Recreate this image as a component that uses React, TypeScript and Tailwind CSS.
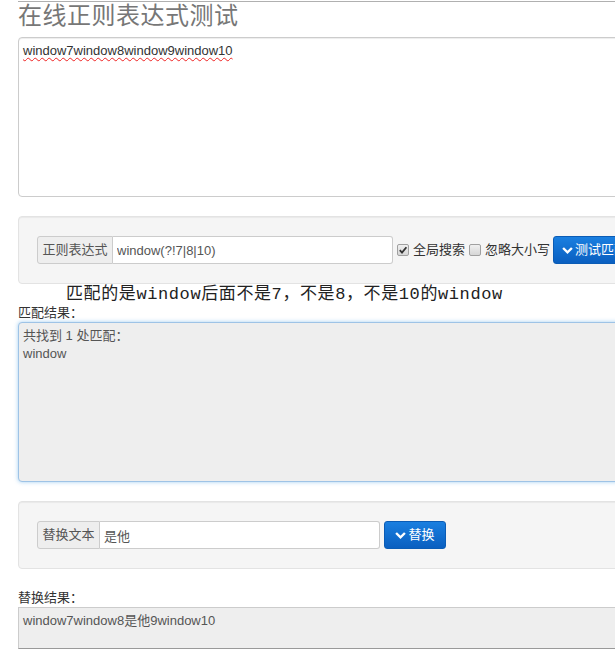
import React, { useState } from 'react';

const sans = "font-['Helvetica_Neue',Helvetica,Arial,'Liberation_Sans','Noto_Sans_CJK_SC',sans-serif]";

const Chevron: React.FC = () => (
  <svg width="11" height="9" viewBox="0 0 12 9" className="mr-[2px] inline-block">
    <path d="M1.2 1.8 L6 6.6 L10.8 1.8" fill="none" stroke="white" strokeWidth="2.6" strokeLinejoin="miter" />
  </svg>
);

const Check: React.FC<{ checked: boolean; onToggle: () => void }> = ({ checked, onToggle }) => (
  <span
    onClick={onToggle}
    className="relative w-[12px] h-[12px] mr-[4px] border border-[#a0a0a0] rounded-[2px] bg-gradient-to-b from-[#f0f0f0] to-[#d6d6d6] inline-flex items-center justify-center cursor-pointer"
  >
    {checked && (
      <svg width="10" height="10" viewBox="0 0 10 10" className="absolute">
        <path d="M1.8 5.2 L4 7.6 L8.4 2.2" fill="none" stroke="#333" strokeWidth="1.8" />
      </svg>
    )}
  </span>
);

const App: React.FC = () => {
  const [source] = useState('window7window8window9window10');
  const [regex, setRegex] = useState('window(?!7|8|10)');
  const [replaceText, setReplaceText] = useState('是他');
  const [globalSearch, setGlobalSearch] = useState(true);
  const [ignoreCase, setIgnoreCase] = useState(false);

  return (
    <div className={`w-full h-[651px] overflow-hidden bg-white text-[#333] ${sans}`}>
      <div className="ml-[18px] w-[640px]">
        <div className="h-[1px] bg-[#b0b0b0] mt-[1px]" />
        <h1 className="text-[24px] leading-[28px] text-[#777] h-[35px] tracking-[0.5px]">在线正则表达式测试</h1>

        {/* 源文本 */}
        <div className="h-[160px] border border-[#ccc] rounded-[4px] px-[4px] pt-[4px] text-[13px] leading-[18px] shadow-[inset_0_1px_1px_rgba(0,0,0,0.075)]">
          <span className="underline decoration-wavy decoration-[#e22] underline-offset-[2px] decoration-[1px]">{source}</span>
        </div>

        {/* 正则表达式 */}
        <div className="mt-[19px] h-[68px] bg-[#f5f5f5] border border-[#e3e3e3] rounded-[4px] pl-[18px] pt-[19px] shadow-[inset_0_1px_1px_rgba(0,0,0,0.05)]">
          <div className="flex items-center h-[28px]">
            <span className="h-[28px] w-[76px] flex items-center justify-center bg-[#eee] border border-[#ccc] rounded-l-[3px] text-[13px] text-[#555]">正则表达式</span>
            <input
              value={regex}
              onChange={(e) => setRegex(e.target.value)}
              className="h-[28px] w-[280px] border border-l-0 border-[#ccc] rounded-r-[3px] bg-white px-[4px] text-[13px] text-[#555] outline-none"
            />
            <label className="flex items-center ml-[4px] text-[13px] text-[#333]">
              <Check checked={globalSearch} onToggle={() => setGlobalSearch(!globalSearch)} />
              全局搜索
            </label>
            <label className="flex items-center ml-[4px] text-[13px] text-[#333]">
              <Check checked={ignoreCase} onToggle={() => setIgnoreCase(!ignoreCase)} />
              忽略大小写
            </label>
            <button type="button" className="ml-[3px] h-[28px] px-[8px] flex items-center rounded-[3px] text-white text-[13px] border border-[#0b5cb5] bg-gradient-to-b from-[#1a7fe0] to-[#0a5fc0] whitespace-nowrap">
              <Chevron />测试匹配
            </button>
          </div>
        </div>

        <p className="font-['Liberation_Mono','Noto_Sans_CJK_SC',serif] text-[17px] leading-[18px] tracking-[0.6px] text-[#222] ml-[48px] mt-[2px]">
          匹配的是window后面不是7，不是8，不是10的window
        </p>
        <div className="text-[13px] leading-[15px] mt-[1px] text-[#333]">匹配结果：</div>

        {/* 匹配结果 */}
        <div className="mt-[2px] h-[160px] bg-[#eee] border border-[#9ec3e6] rounded-[4px] px-[4px] pt-[4px] text-[13px] leading-[18px] text-[#555] shadow-[0_0_4px_rgba(102,175,233,0.6)]">
          <div>共找到 1 处匹配：</div>
          <div>window</div>
        </div>

        {/* 替换 */}
        <div className="mt-[19px] h-[68px] bg-[#f5f5f5] border border-[#e3e3e3] rounded-[4px] pl-[18px] pt-[19px] shadow-[inset_0_1px_1px_rgba(0,0,0,0.05)]">
          <div className="flex items-center h-[28px]">
            <span className="h-[28px] w-[63px] flex items-center justify-center bg-[#eee] border border-[#ccc] rounded-l-[3px] text-[13px] text-[#555]">替换文本</span>
            <input
              value={replaceText}
              onChange={(e) => setReplaceText(e.target.value)}
              className="h-[28px] w-[280px] border border-l-0 border-[#ccc] rounded-r-[3px] bg-white px-[4px] text-[13px] text-[#555] outline-none"
            />
            <button type="button" className="ml-[4px] h-[28px] w-[62px] flex items-center justify-center rounded-[3px] text-white text-[13px] border border-[#0b5cb5] bg-gradient-to-b from-[#1a7fe0] to-[#0a5fc0]">
              <Chevron />替换
            </button>
          </div>
        </div>

        <div className="text-[13px] leading-[15px] mt-[21px] text-[#333]">替换结果：</div>
        <div className="mt-[2px] h-[42px] bg-[#eee] border border-[#ccc] border-b-[#999] px-[4px] pt-[4px] text-[13px] leading-[18px] text-[#555]">
          window7window8是他9window10
        </div>
      </div>
    </div>
  );
};

export default App;
